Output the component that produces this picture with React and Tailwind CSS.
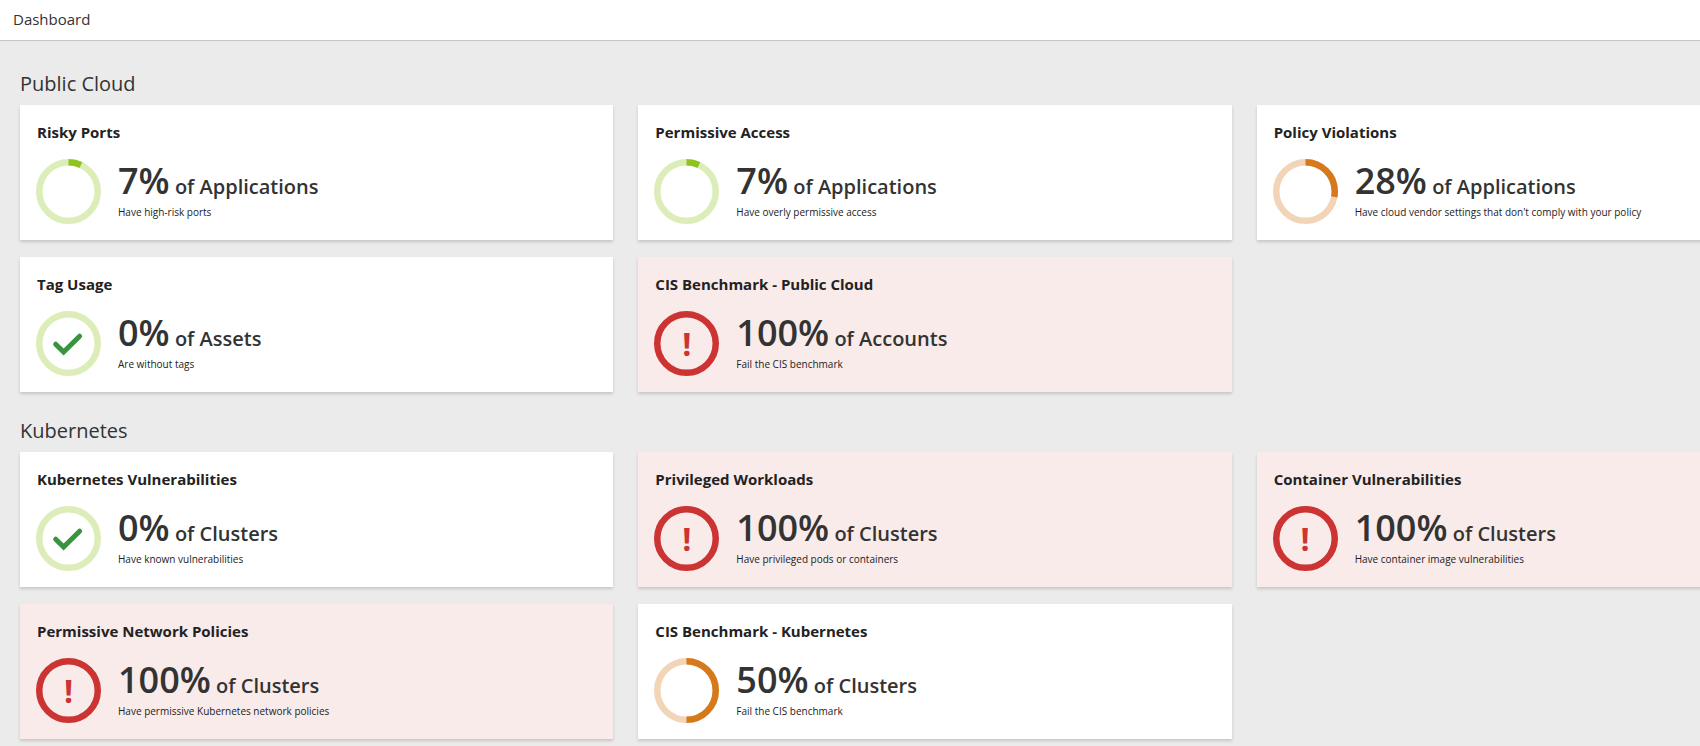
const tones = {
  green: { track: "#dcedb9", fill: "#8fc31f" },
  orange: { track: "#f2d5b7", fill: "#d6791b" },
  red: { track: "#cc3333", fill: "#cc3333" },
};

const sections = [
  {
    title: "Public Cloud",
    cards: [
      { title: "Risky Ports", value: 7, unit: "Applications", note: "Have high-risk ports", tone: "green" },
      { title: "Permissive Access", value: 7, unit: "Applications", note: "Have overly permissive access", tone: "green" },
      { title: "Policy Violations", value: 28, unit: "Applications", note: "Have cloud vendor settings that don't comply with your policy", tone: "orange" },
      { title: "Tag Usage", value: 0, unit: "Assets", note: "Are without tags", tone: "green" },
      { title: "CIS Benchmark - Public Cloud", value: 100, unit: "Accounts", note: "Fail the CIS benchmark", tone: "red" },
    ],
  },
  {
    title: "Kubernetes",
    cards: [
      { title: "Kubernetes Vulnerabilities", value: 0, unit: "Clusters", note: "Have known vulnerabilities", tone: "green" },
      { title: "Privileged Workloads", value: 100, unit: "Clusters", note: "Have privileged pods or containers", tone: "red" },
      { title: "Container Vulnerabilities", value: 100, unit: "Clusters", note: "Have container image vulnerabilities", tone: "red" },
      { title: "Permissive Network Policies", value: 100, unit: "Clusters", note: "Have permissive Kubernetes network policies", tone: "red" },
      { title: "CIS Benchmark - Kubernetes", value: 50, unit: "Clusters", note: "Fail the CIS benchmark", tone: "orange" },
    ],
  },
];

function Gauge({ value, tone }) {
  const { track, fill } = tones[tone];
  return (
    <div className="grid size-[65px] shrink-0 place-items-center *:col-start-1 *:row-start-1">
      <svg viewBox="0 0 65 65" className="size-full" fill="none" aria-hidden="true">
        <circle cx="32.5" cy="32.5" r="29.25" stroke={track} strokeWidth="6.5" />
        {value > 0 && value < 100 && (
          <circle
            cx="32.5"
            cy="32.5"
            r="29.25"
            stroke={fill}
            strokeWidth="6.5"
            pathLength="100"
            strokeDasharray={`${value} 100`}
            transform="rotate(-90 32.5 32.5)"
          />
        )}
        {value === 0 && (
          <path d="M19.7 33.2 27.6 41 43.6 25.2" stroke="#38943e" strokeWidth="5" strokeLinecap="round" />
        )}
      </svg>
      {value === 100 && (
        <span className="text-[32px] leading-8 font-bold text-[#cc3333]">!</span>
      )}
    </div>
  );
}

function Card({ title, value, unit, note, tone }) {
  return (
    <article
      className={`p-4 shadow-[0_2px_3px_rgba(0,0,0,0.16)] ${tone === "red" ? "bg-[#f9ebea]" : "bg-white"}`}
    >
      <h3 className="pl-px text-[15px] leading-[22px] font-bold text-[#222]">{title}</h3>
      <div className="mt-4 flex gap-[17px]">
        <Gauge value={value} tone={tone} />
        <div className="min-w-0">
          <p className="text-4xl leading-[44px] font-semibold text-[#333]">
            {value}%<span className="text-xl leading-none whitespace-pre"> of {unit}</span>
          </p>
          <p className="text-[10px] leading-[19px] text-[#222]">{note}</p>
        </div>
      </div>
    </article>
  );
}

export default function App() {
  return (
    <div className="min-h-screen overflow-x-hidden bg-[#ebebeb] font-['Open_Sans',sans-serif] text-[#333]">
      <header className="border-b border-[#c6c6c6] bg-white px-[13px] pt-[7px] pb-[9px]">
        <h1 className="text-[15px] leading-6">Dashboard</h1>
      </header>
      <main className="flex w-[110%] flex-col gap-[25px] px-5 pt-[29px] pb-[7px]">
        {sections.map((section) => (
          <section key={section.title}>
            <h2 className="text-xl leading-7">{section.title}</h2>
            <div className="mt-[7px] grid grid-cols-3 gap-x-[25px] gap-y-[17px]">
              {section.cards.map((card) => (
                <Card key={card.title} {...card} />
              ))}
            </div>
          </section>
        ))}
      </main>
    </div>
  );
}
